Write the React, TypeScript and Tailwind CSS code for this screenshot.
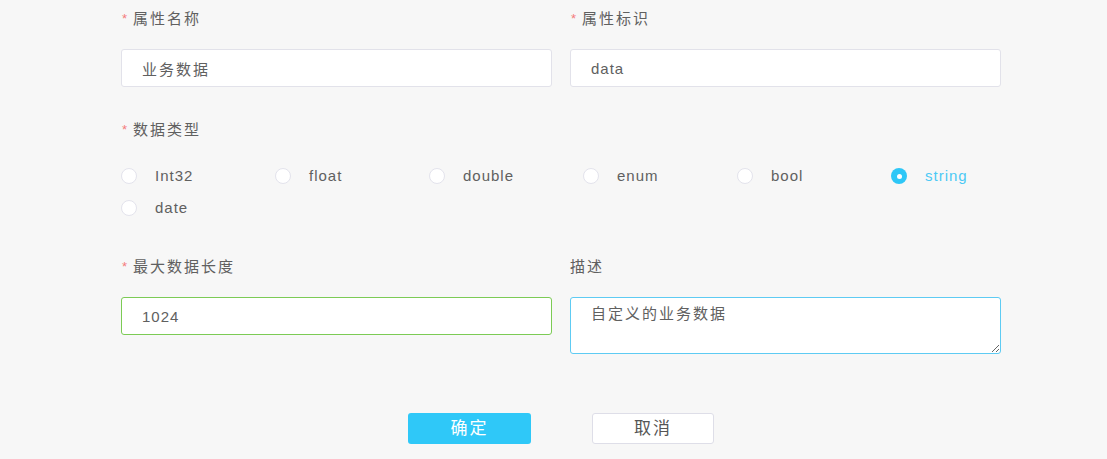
import React from 'react';

const types = ['Int32', 'float', 'double', 'enum', 'bool', 'string', 'date'];

function Label({ text, required = true }: { text: string; required?: boolean }) {
  return (
    <div className="flex items-center h-5 text-[15px] tracking-[2px] text-[#606060]">
      {required && <span className="text-[#f47c7c] text-[13px] ml-px mr-[6px] tracking-normal">*</span>}
      <span>{text}</span>
    </div>
  );
}

function Radio({ label, checked }: { label: string; checked?: boolean }) {
  return (
    <div className="w-[154px] h-8 flex items-center">
      {checked ? (
        <span className="w-4 h-4 rounded-full bg-[#2ec7f7] flex items-center justify-center">
          <span className="w-[5px] h-[5px] rounded-full bg-white" />
        </span>
      ) : (
        <span className="w-4 h-4 rounded-full bg-white border border-[#e3e3ec]" />
      )}
      <span
        className={`ml-[18px] text-[15px] tracking-[1px] ${checked ? 'text-[#4cc9f5]' : 'text-[#606060]'}`}
      >
        {label}
      </span>
    </div>
  );
}

export default function App() {
  return (
    <div className="w-[1107px] h-[459px] bg-[#f7f7f7] font-['Liberation_Sans','Noto_Sans_CJK_SC',sans-serif] overflow-hidden">
      <div className="w-[880px] ml-[121px] pt-[9px]">
        {/* row 1 */}
        <div className="flex gap-[18px]">
          <div className="w-[431px]">
            <Label text="属性名称" />
            <input
              readOnly
              defaultValue="业务数据"
              className="mt-5 w-full h-[38px] rounded-[3px] bg-white border border-[#e2e2ea] pl-5 text-[15px] tracking-[2px] text-[#606060] outline-none"
            />
          </div>
          <div className="w-[431px]">
            <Label text="属性标识" />
            <input
              readOnly
              defaultValue="data"
              className="mt-5 w-full h-[38px] rounded-[3px] bg-white border border-[#e2e2ea] pl-5 text-[15px] tracking-[1px] text-[#606060] outline-none"
            />
          </div>
        </div>

        {/* data type */}
        <div className="mt-[33px]">
          <Label text="数据类型" />
          <div className="mt-5 flex flex-wrap w-[924px]">
            {types.map((t) => (
              <Radio key={t} label={t} checked={t === 'string'} />
            ))}
          </div>
        </div>

        {/* row 3 */}
        <div className="mt-[33px] flex gap-[18px] items-start">
          <div className="w-[431px]">
            <Label text="最大数据长度" />
            <input
              readOnly
              defaultValue="1024"
              className="mt-5 w-full h-[38px] rounded-[3px] bg-white border border-[#7ccb55] pl-5 text-[15px] tracking-[1px] text-[#606060] outline-none"
            />
          </div>
          <div className="w-[431px]">
            <Label text="描述" required={false} />
            <textarea
              readOnly
              defaultValue="自定义的业务数据"
              className="mt-5 block w-full h-[57px] rounded-[3px] bg-white border border-[#5ecbf3] pl-5 pt-[6px] leading-5 text-[15px] tracking-[2px] text-[#606060] outline-none resize"
            />
          </div>
        </div>

        {/* buttons */}
        <div className="mt-[59px] flex justify-center gap-[61px]">
          <button className="w-[123px] h-[31px] rounded-[3px] bg-[#2fc8f8] text-white text-[17px] tracking-[2px]">
            确定
          </button>
          <button className="w-[122px] h-[31px] rounded-[3px] bg-white border border-[#dedee8] text-[#555] text-[17px] tracking-[2px]">
            取消
          </button>
        </div>
      </div>
    </div>
  );
}
